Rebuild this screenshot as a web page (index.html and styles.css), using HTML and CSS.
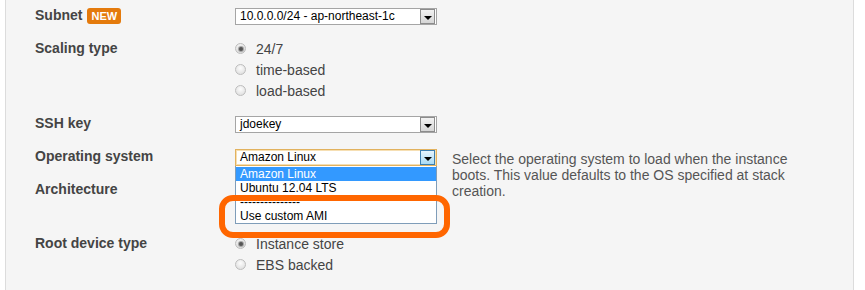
FILE: index.html
```html
<!DOCTYPE html>
<html>
<head>
<meta charset="utf-8">
<link rel="stylesheet" href="styles.css">
</head>
<body>
<div class="panel">
  <div class="row">
    <div class="label">Subnet <span class="badge">NEW</span></div>
    <div class="control">
      <div class="select"><span class="val">10.0.0.0/24 - ap-northeast-1c</span><span class="arrow"></span></div>
    </div>
  </div>
  <div class="row">
    <div class="label">Scaling type</div>
    <div class="control">
      <div class="radio"><span class="dot checked"></span>24/7</div>
      <div class="radio"><span class="dot"></span>time-based</div>
      <div class="radio"><span class="dot"></span>load-based</div>
    </div>
  </div>
  <div class="row">
    <div class="label">SSH key</div>
    <div class="control">
      <div class="select"><span class="val">jdoekey</span><span class="arrow"></span></div>
    </div>
  </div>
  <div class="row">
    <div class="label">Operating system</div>
    <div class="control os">
      <div class="select focus"><span class="val">Amazon Linux</span><span class="arrow"></span></div>
      <ul class="dropdown">
        <li class="active">Amazon Linux</li>
        <li>Ubuntu 12.04 LTS</li>
        <li>---------------</li>
        <li>Use custom AMI</li>
      </ul>
    </div>
    <div class="help">Select the operating system to load when the instance boots. This value defaults to the OS specified at stack creation.</div>
  </div>
  <div class="row">
    <div class="label">Architecture</div>
    <div class="control covered"></div>
  </div>
  <div class="row">
    <div class="label">Root device type</div>
    <div class="control">
      <div class="radio"><span class="dot checked"></span>Instance store</div>
      <div class="radio"><span class="dot"></span>EBS backed</div>
    </div>
  </div>
  <div class="callout"></div>
</div>
</body>
</html>
```
FILE: styles.css
```css
html, body {
  margin: 0;
  padding: 0;
  background: #fff;
}
body {
  font-family: "Liberation Sans", Arial, sans-serif;
  color: #444;
}
.panel {
  position: relative;
  margin-left: 5px;
  width: 847px;
  height: 285px;
  overflow: hidden;
  box-sizing: content-box;
  border-left: 1px solid #dcdcdc;
  border-right: 1px solid #dcdcdc;
  background: #f5f5f5;
  padding: 5px 0 0 0;
}
.row {
  display: grid;
  grid-template-columns: 200px 202px 362px;
  margin-left: 29px;
  margin-bottom: 12px;
  align-items: start;
}
.label {
  font-size: 14px;
  font-weight: bold;
  line-height: 21px;
  color: #444;
  display: flex;
  align-items: center;
}
.badge {
  display: inline-block;
  margin-left: 5px;
  background: #e47a0c;
  color: #fff;
  font-size: 11px;
  font-weight: bold;
  line-height: 16px;
  height: 16px;
  padding: 0 4px;
  border-radius: 3px;
}
.control {
  position: relative;
}
.control.covered {
  height: 42px;
}
.select {
  margin-top: 3px;
  height: 17px;
  box-sizing: border-box;
  border: 1px solid #a5a5a5;
  background: #fff;
  display: flex;
  align-items: stretch;
  font-size: 12px;
  color: #000;
}
.select .val {
  flex: 1;
  padding-left: 4px;
  line-height: 15px;
}
.arrow {
  width: 15px;
  margin: 0 1px 0 0;
  box-sizing: border-box;
  border: 1px solid #8c8c8c;
  background: linear-gradient(#f2f2f2, #d6d6d6);
  display: flex;
  align-items: center;
  justify-content: center;
}
.arrow::after {
  content: "";
  display: block;
  margin-top: 2px;
  border-left: 4px solid transparent;
  border-right: 4px solid transparent;
  border-top: 4px solid #000;
}
.select.focus {
  border-color: #e2b25e;
  box-shadow: inset 0 0 0 1px #f6dfb3;
}
.select.focus .arrow {
  border-color: #3c7fb1;
  background: linear-gradient(#e5f4fd, #a9dbf6);
}
.dropdown {
  position: absolute;
  left: 0;
  top: 20px;
  z-index: 2;
  width: 202px;
  box-sizing: border-box;
  margin: 0;
  padding: 1px 0 0 0;
  list-style: none;
  background: #fff;
  border: 1px solid #7f9db9;
  border-top: none;
  font-size: 12px;
  color: #000;
}
.dropdown li {
  height: 14px;
  line-height: 14px;
  padding-left: 4px;
}
.dropdown li.active {
  background: #3399ff;
  color: #fff;
}
.radio {
  display: flex;
  align-items: center;
  height: 21px;
  font-size: 14px;
  color: #444;
}
.dot {
  width: 11px;
  height: 11px;
  box-sizing: border-box;
  border-radius: 50%;
  border: 1px solid #bdbdbd;
  background: radial-gradient(circle at 50% 35%, #fdfdfd, #d9d9d9);
  margin-right: 10px;
  position: relative;
}
.dot.checked::after {
  content: "";
  position: absolute;
  left: 2.5px;
  top: 2.5px;
  width: 4px;
  height: 4px;
  border-radius: 50%;
  background: #555;
  box-shadow: 0 0 1px 1px #9a9a9a;
}
.help {
  height: 21px;
  box-sizing: border-box;
  padding: 5px 0 0 15px;
  font-size: 14px;
  line-height: 16px;
  color: #555;
}
.callout {
  position: absolute;
  left: 213px;
  top: 195px;
  width: 231px;
  height: 43px;
  box-sizing: border-box;
  border: 6px solid #ff6600;
  border-radius: 14px;
  z-index: 3;
}
```
